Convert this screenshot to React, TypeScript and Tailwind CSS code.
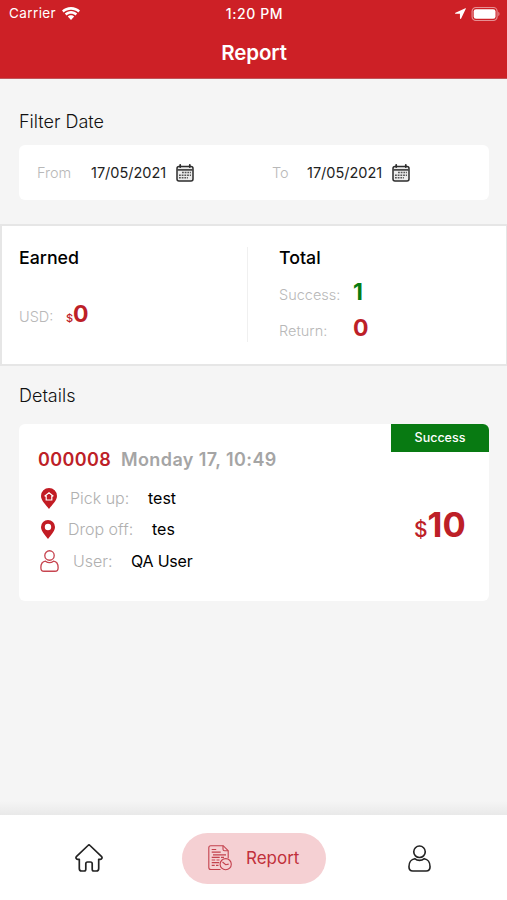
import React from 'react';

type IconProps = { className?: string };

const WifiIcon: React.FC<IconProps> = ({ className }) => (
  <svg className={className} viewBox="0 0 18 13" fill="currentColor">
    <path d="M9 0C5.500 0 2.300 1.300 0 3.600l1.700 1.800C3.600 3.500 6.200 2.700 9 2.700s5.400.8 7.300 2.700L18 3.600C15.700 1.300 12.500 0 9 0Z" />
    <path d="M9 4.100c-2.300 0-4.500.9-6.200 2.500l1.700 1.900C5.700 7.300 7.300 6.700 9 6.700s3.300.6 4.500 1.800l1.700-1.900C13.500 5 11.300 4.100 9 4.100Z" />
    <path d="M9 8.200c-1.200 0-2.400.5-3.200 1.400L9 13l3.200-3.400C11.400 8.700 10.200 8.200 9 8.200Z" />
  </svg>
);

const LocationArrow: React.FC<IconProps> = ({ className }) => (
  <svg className={className} viewBox="0 0 12 12" fill="currentColor">
    <path d="M11.300.2.500 5.100c-.7.300-.5 1.300.2 1.300h4.700v4.800c0 .8 1 .9 1.300.3L11.800.8c.2-.4-.1-.8-.5-.6Z" />
  </svg>
);

const BatteryIcon: React.FC<IconProps> = ({ className }) => (
  <svg className={className} viewBox="0 0 31 15">
    <rect x=".6" y=".6" width="26.800" height="13.800" rx="4" fill="none" stroke="#fff" strokeOpacity=".5" strokeWidth="1.200" />
    <rect x="2.300" y="2.300" width="23.400" height="10.400" rx="2.500" fill="#fff" />
    <path d="M28.700 5.200c1.700.7 1.700 3.900 0 4.600Z" fill="#fff" fillOpacity=".5" />
  </svg>
);

const CalendarIcon: React.FC<IconProps> = ({ className }) => (
  <svg className={className} viewBox="0 0 18 18" fill="none" stroke="#2d2d2d">
    <rect x="1" y="2.500" width="16" height="14.500" rx="2" fill="#ececec" strokeWidth="1.500" />
    <path d="M1.500 5.900h15" strokeWidth="1.500" />
    <path d="M4.200.9v2.200M13.800.9v2.200" strokeWidth="1.800" strokeLinecap="round" />
    <path d="M6 8.600h9M3 11.200h12M3 13.800h9" stroke="#555" strokeWidth="1.500" strokeDasharray="1.800 .9" />
  </svg>
);

const PickUpIcon: React.FC<IconProps> = ({ className }) => (
  <svg className={className} viewBox="0 0 16 21">
    <path d="M8 0a8 8 0 0 0-8 8c0 4.600 4.600 8.500 8 13 3.400-4.500 8-8.400 8-13a8 8 0 0 0-8-8Z" fill="#c21c24" />
    <path d="M3.600 8.300 8 4.700l4.400 3.600M5.200 7.700v4.300h5.600V7.700" fill="none" stroke="#fff" strokeWidth="1.200" />
  </svg>
);

const DropOffIcon: React.FC<IconProps> = ({ className }) => (
  <svg className={className} viewBox="0 0 14 19">
    <path
      fillRule="evenodd"
      d="M7 0a7 7 0 0 0-7 7c0 4.200 4 7.700 7 12 3-4.300 7-7.800 7-12a7 7 0 0 0-7-7Zm0 3.800a3.200 3.200 0 1 1 0 6.400 3.200 3.200 0 0 1 0-6.400Z"
      fill="#c21c24"
    />
  </svg>
);

const UserIcon: React.FC<IconProps> = ({ className }) => (
  <svg className={className} viewBox="0 0 24 28" fill="none" stroke="currentColor" strokeWidth="1.700">
    <circle cx="12" cy="7" r="6" />
    <path d="M7 14.200c-3.500.4-6 3.800-6 8.300C1 25.600 2.400 27 5 27h14c2.600 0 4-1.400 4-4.500 0-4.500-2.500-7.900-6-8.300-1.500 1.200-3.200 1.800-5 1.800s-3.500-.6-5-1.800Z" />
  </svg>
);

const HomeIcon: React.FC<IconProps> = ({ className }) => (
  <svg className={className} viewBox="0 0 28 28" fill="none" stroke="#222" strokeWidth="1.700" strokeLinejoin="round">
    <path d="M13 1.500 1.600 12.300c-1.300 1.300-.5 3 1.100 3h1.600v9.200c0 1.600.8 2.500 2.300 2.500h2.500c1.200 0 1.700-.6 1.700-1.700v-5.500c0-1.200.6-1.800 1.700-1.800h3c1.100 0 1.700.6 1.700 1.800v5.500c0 1.100.5 1.700 1.700 1.700h2.500c1.500 0 2.300-.9 2.300-2.500v-9.200h1.600c1.600 0 2.400-1.700 1.100-3L15 1.500c-.6-.6-1.400-.6-2 0Z" />
  </svg>
);

const ReportIcon: React.FC<IconProps> = ({ className }) => (
  <svg className={className} viewBox="0 0 24 26" fill="none" stroke="#c4414d" strokeWidth="1.100">
    <path d="M12.500 24.500H2.800c-1.300 0-2-.7-2-2V2.700c0-1.300.7-2 2-2h12.400l5 5v7.500" />
    <path d="M15 .8v3.400c0 1.100.5 1.600 1.600 1.600h3.500" />
    <path d="M3.700 4.500h4.500M3.700 7.200h9M5 9.800h13M3.700 12.400h8M13 12.400h3M3.700 15h3.500M8.500 15h3M3.700 17.600h7.500M3.700 20.400h3M8 20.400h2.500" strokeWidth="1.200" />
    <circle cx="17.700" cy="19.200" r="5.600" />
    <path d="m14.500 17 3.200 2.700 3-.6" />
  </svg>
);

const DateField = ({ label, value, labelClass }: { label: string; value: string; labelClass: string }) => (
  <div className="flex items-center">
    <span className={`${labelClass} text-[14.5px] font-light text-[#b8b8b8]`}>{label}</span>
    <span className="w-[85px] text-[14.5px] text-[#222]">{value}</span>
    <CalendarIcon className="h-[18px] w-[18px]" />
  </div>
);

export default function App() {
  return (
    <div className="flex h-[900px] w-[507px] flex-col overflow-hidden bg-[#f5f5f5] font-[Inter,sans-serif] whitespace-nowrap text-[#222]">
      <header className="h-[79px] shrink-0 border-b border-[#c0555a] bg-[#cd2026] text-white">
        <div className="grid h-[27px] grid-cols-3 items-center text-[13.5px]">
          <div className="flex items-center gap-[6px] pl-[9px] tracking-[0.4px]">
            <span>Carrier</span>
            <WifiIcon className="h-[13px] w-[18px]" />
          </div>
          <span className="pl-[2px] text-center text-[14px] font-medium tracking-[0.6px]">1:20 PM</span>
          <div className="flex items-center justify-end gap-[5px] pr-[6px]">
            <LocationArrow className="h-[11px] w-[11px]" />
            <BatteryIcon className="h-[14px] w-[30px]" />
          </div>
        </div>
        <h1 className="pt-[10px] pl-[1px] text-center text-[20.5px] leading-[31px] font-semibold tracking-[-0.1px]">Report</h1>
      </header>

      <section className="px-[19px] pt-[30px]">
        <h2 className="pt-px text-[18px] leading-6 font-light text-[#111]">Filter Date</h2>
        <div className="mt-[11px] mr-[-1px] flex h-[55px] items-center rounded-md bg-white pl-[18px]">
          <div className="w-[235px]">
            <DateField label="From" value="17/05/2021" labelClass="w-[54px]" />
          </div>
          <DateField label="To" value="17/05/2021" labelClass="w-[35px]" />
        </div>
      </section>

      <section className="mt-6 flex h-[142px] shrink-0 border-2 border-r-[1px] border-[#e6e6e6] bg-white pt-[21px] pl-[17px]">
        <div className="h-[95px] w-[229px] border-r border-[#f0f0f0]">
          <h3 className="text-[17.800px] leading-[22px] font-medium text-black">Earned</h3>
          <div className="mt-[31px] flex items-baseline leading-7">
            <span className="w-[47px] text-[14.5px] font-light text-[#b8b8b8]">USD:</span>
            <span className="text-[11px] font-medium text-[#bd2027]">$</span>
            <span className="text-[23px] font-bold text-[#bd2027]">0</span>
          </div>
        </div>
        <div className="pl-[31px]">
          <h3 className="text-[17.800px] leading-[22px] font-medium text-black">Total</h3>
          <div className="mt-[9px] flex h-9 items-baseline leading-7">
            <span className="w-[74px] text-[14.5px] font-light text-[#b8b8b8]">Success:</span>
            <span className="text-[23px] font-bold text-[#087c12]">1</span>
          </div>
          <div className="flex items-baseline leading-7">
            <span className="w-[74px] text-[14.5px] font-light text-[#b8b8b8]">Return:</span>
            <span className="text-[23px] font-bold text-[#bd2027]">0</span>
          </div>
        </div>
      </section>

      <section className="flex-1 pt-[18px] pr-[18px] pl-[19px]">
        <h2 className="text-[18px] leading-6 font-light text-[#111]">Details</h2>
        <article className="mt-[16px] flex h-[177px] justify-between overflow-hidden rounded-md bg-white">
          <div className="pt-[23px] pl-[19px]">
            <div className="flex h-6 items-center text-[18px] font-semibold tracking-[0.4px]">
              <span className="w-[83px] text-[#bd2027]">000008</span>
              <span className="text-[#a5a5a5]">Monday 17, 10:49</span>
            </div>
            <div className="mt-[11px] flex flex-col text-[16px]">
              <div className="flex h-8 items-center">
                <PickUpIcon className="mr-[13px] ml-[3px] h-[21px] w-[16px]" />
                <span className="w-[78px] font-light text-[#b0b0b0]">Pick up:</span>
                <span className="text-black">test</span>
              </div>
              <div className="flex h-[30px] items-center">
                <DropOffIcon className="mr-[13px] ml-[3px] h-[19px] w-[14px]" />
                <span className="w-[84px] font-light text-[#b0b0b0]">Drop off:</span>
                <span className="text-black">tes</span>
              </div>
              <div className="flex h-[33px] items-center">
                <UserIcon className="mr-[14px] ml-[2px] h-[22px] w-[19px] text-[#c74550]" />
                <span className="w-[58px] font-light text-[#b0b0b0]">User:</span>
                <span className="tracking-[-0.2px] text-black">QA User</span>
              </div>
            </div>
          </div>
          <div className="flex flex-col items-end">
            <div className="flex h-7 w-[98px] items-center justify-center bg-[#087a12] pt-px text-[12.5px] font-medium text-white">
              Success
            </div>
            <div className="mt-[51px] mr-[23px] flex items-baseline leading-[44px] text-[#bd2027]">
              <span className="text-[21px] font-medium">$</span>
              <span className="text-[34.5px] font-bold tracking-[0.2px]">10</span>
            </div>
          </div>
        </article>
      </section>

      <div className="h-[14px] shrink-0 bg-linear-to-b from-[#f5f5f5] to-[#e9e9e9]" />
      <nav className="flex h-[85px] shrink-0 items-center bg-white pt-px pl-[75px]">
        <HomeIcon className="h-[28px] w-[28px]" />
        <div className="ml-[79px] flex h-[51px] w-[144px] items-center rounded-full bg-[#f5d0d3] pl-[26px]">
          <ReportIcon className="h-[26px] w-[24px]" />
          <span className="ml-[14px] pt-[2px] text-[17px] text-[#c1303b]">Report</span>
        </div>
        <UserIcon className="ml-[82px] h-[27px] w-[23px] text-[#222]" />
      </nav>
    </div>
  );
}
